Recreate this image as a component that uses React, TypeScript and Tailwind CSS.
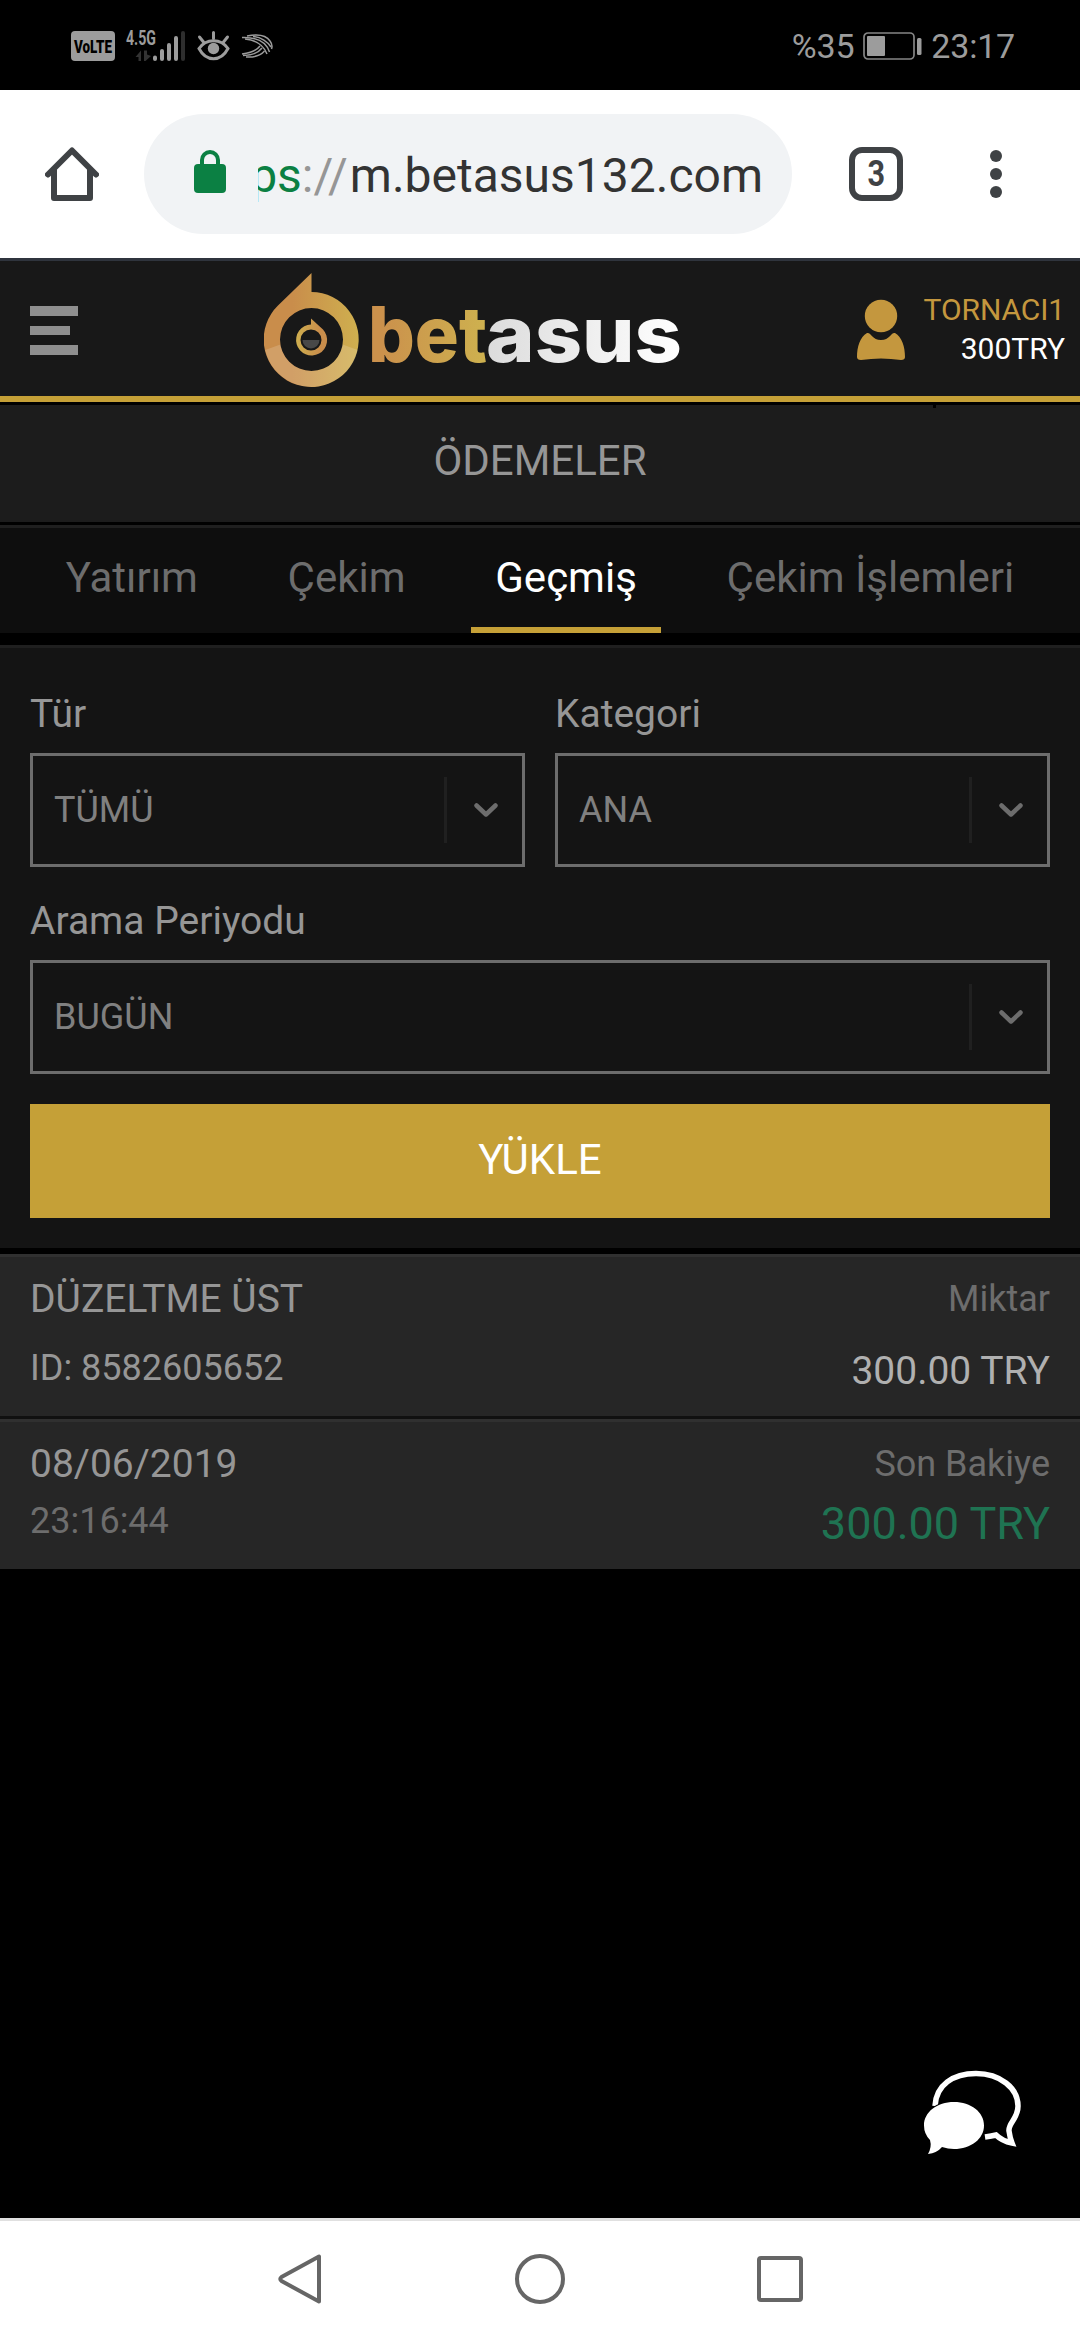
import React from "react";

function StatusBar() {
  return (
    <div className="flex h-[90px] items-center justify-between bg-black pl-[71px] pr-[65px] text-[#9c9c9c]">
      <div className="flex items-center pt-[1px]">
        <svg className="overflow-visible" width="44" height="30" viewBox="0 0 44 30">
          <rect width="44" height="30" rx="4" fill="#9c9c9c" />
          <text x="3" y="21.500" fontSize="19" fontWeight="900" textLength="38" lengthAdjust="spacingAndGlyphs" fill="#000" fontFamily="Roboto, sans-serif">VoLTE</text>
        </svg>
        <svg className="ml-[11px] overflow-visible" width="60" height="32" viewBox="0 0 60 32">
          <text x="0" y="14.500" fontSize="20" fontWeight="700" textLength="30" lengthAdjust="spacingAndGlyphs" fill="#9c9c9c" fontFamily="Roboto, sans-serif">4.5G</text>
          <path d="M12.500 31V27H9.500L15 20.500V31ZM18 20.500h3V24.500L25 26L19.500 31H18Z" fill="#333" />
          <g strokeWidth="4" strokeLinecap="round" stroke="#9c9c9c">
            <path d="M29 27.500v1.500M36 21v8M43 15v14M50 8v21" />
            <path d="M57 3v26" stroke="#2e2e2e" />
          </g>
        </svg>
        <svg className="ml-[11px]" width="34" height="32" viewBox="0 0 34 32" fill="none" stroke="#9c9c9c" strokeWidth="3" strokeLinecap="round">
          <path d="M2 18.500C9 8 24 8 31 18.500C24 32 9 32 2 18.500Z" />
          <path d="M16.500 2.500v6M2.500 7l4 5M30.500 7l-4 5" />
          <circle cx="16.500" cy="18.500" r="5.700" fill="#9c9c9c" stroke="none" />
        </svg>
        <svg className="ml-[10px]" width="33" height="24" viewBox="0 0 33 24" fill="none" stroke="#9c9c9c" strokeWidth="1.500">
          <path d="M6 2C16 0 25 1 29 7Q32 11 30.500 15" />
          <path d="M1 3.500C15 3 25 7 28.500 18" />
          <path d="M12 2.500C20 3 27 8 30 13" />
          <path d="M4 5C15 6 22 10 26 20" />
          <path d="M1 20C10 19 16 16 19 12M2 21.500C12 21.500 18 18 21 14M5 23C13 23.500 20 21 23.500 17" />
        </svg>
      </div>
      <div className="flex items-center pt-[2px] text-[34px] leading-[40px]">
        <span className="tracking-[-0.2px]">%35</span>
        <svg className="ml-[9px] mr-[9px]" width="59" height="28" viewBox="0 0 59 28">
          <rect x="1" y="1" width="50" height="26" rx="4" fill="none" stroke="#858585" strokeWidth="1.700" />
          <rect x="4" y="4" width="18" height="20" rx="1" fill="#9c9c9c" />
          <rect x="54" y="6" width="4.500" height="17" rx="1.500" fill="#9c9c9c" />
        </svg>
        <span className="tracking-[-0.2px]">23:17</span>
      </div>
    </div>
  );
}

function BrowserBar() {
  return (
    <div className="flex h-[171px] items-center border-b-[3px] border-[#2f343d] bg-white">
      <svg className="ml-[45px] shrink-0" width="54" height="54" viewBox="0 0 54 54" fill="none" stroke="#3f4245" strokeWidth="6" strokeLinecap="round" strokeLinejoin="round">
        <path d="M3 27.500L27 3.500L51 27.500" />
        <path d="M9 23v28h36V23" />
      </svg>
      <div className="ml-[45px] flex h-[120px] w-[648px] shrink-0 items-center rounded-full bg-[#f1f3f5] pl-[50px]">
        <svg className="mb-[5px]" width="32" height="43" viewBox="0 0 32 43">
          <rect y="14" width="32" height="29" rx="4" fill="#0b8043" />
          <path d="M8 17V10a8 8 0 0 1 16 0v7" fill="none" stroke="#0b8043" strokeWidth="4" />
        </svg>
        <div className="ml-[32px] flex w-[505px] justify-end overflow-hidden whitespace-nowrap pt-[3px] text-[48px] leading-[60px] text-[#333333]">
          <span><span className="mr-[2px]"><span className="text-[#0b8043]">https</span><span className="text-[#969696]">://</span></span>m.betasus132.com</span>
        </div>
      </div>
      <div className="ml-[57px] flex h-[54px] w-[54px] shrink-0 items-center justify-center rounded-[13px] border-[6px] border-[#3f4245] text-[36px] font-bold leading-[40px] text-[#3f4245]">
        <span className="scale-x-[0.85]">3</span>
      </div>
      <div className="ml-[87px] flex flex-col gap-[6px]">
        <i className="h-3 w-3 rounded-full bg-[#3f4245]" />
        <i className="h-3 w-3 rounded-full bg-[#3f4245]" />
        <i className="h-3 w-3 rounded-full bg-[#3f4245]" />
      </div>
    </div>
  );
}

function Logo() {
  return (
    <svg width="418" height="118" viewBox="264 272 418 118">
      <defs>
        <linearGradient id="ring" x1="264" x2="359" y1="0" y2="0" gradientUnits="userSpaceOnUse">
          <stop offset="0.300" stopColor="#c98d4b" />
          <stop offset="1" stopColor="#cfb04f" />
        </linearGradient>
        <linearGradient id="drop" x1="327" x2="295" y1="0" y2="0" gradientUnits="userSpaceOnUse">
          <stop offset="0.200" stopColor="#c98d4b" />
          <stop offset="1" stopColor="#cfb04f" />
        </linearGradient>
        <linearGradient id="gold" x1="371" x2="485" y1="0" y2="0" gradientUnits="userSpaceOnUse">
          <stop offset="0.100" stopColor="#cb914c" />
          <stop offset="1" stopColor="#ceb14f" />
        </linearGradient>
        <linearGradient id="silver" x1="487" x2="680" y1="0" y2="0" gradientUnits="userSpaceOnUse">
          <stop offset="0" stopColor="#dcdcdc" />
          <stop offset="1" stopColor="#ffffff" />
        </linearGradient>
      </defs>
      <path fillRule="evenodd" fill="url(#ring)" d="M311.500 273V292A47.500 47.500 0 1 1 278 305.500ZM311.500 308A31.500 31.500 0 1 0 311.500 371A31.500 31.500 0 1 0 311.500 308Z" />
      <path fill="#fff" fillOpacity="0.160" d="M265.200 350L280.400 344.500A31.500 31.500 0 0 0 342.600 344.500L357.800 350A47.500 47.500 0 0 1 265.200 350Z" />
      <path fillRule="evenodd" fill="url(#drop)" d="M311 318.500V324.500A15.500 15.500 0 1 0 323 329.500ZM311 329.500A10.500 10.500 0 1 1 311 350.500A10.500 10.500 0 1 1 311 329.500Z" />
      <path fill="#484848" d="M302.500 340H319.500A8.500 8.500 0 0 1 302.500 340Z" />
      <g fontFamily="Inter, sans-serif" fontWeight="800" fontSize="77">
        <text x="368" y="362" fill="url(#gold)" textLength="119" lengthAdjust="spacingAndGlyphs">bet</text>
        <text x="486" y="362" fill="url(#silver)" textLength="196" lengthAdjust="spacingAndGlyphs">asus</text>
      </g>
    </svg>
  );
}

function SiteHeader() {
  return (
    <header className="flex h-[144px] justify-between border-b-[3px] border-black bg-[#181818]">
      <div className="flex h-[141px] w-full items-start border-b-[6px] border-[#c5a037]">
        <div className="ml-[30px] mt-[45px] flex w-12 flex-col gap-[10px]">
          <i className="h-[9.500px] w-12 bg-[#8f8f8f]" />
          <i className="h-[9.500px] w-10 bg-[#8f8f8f]" />
          <i className="h-[9.500px] w-12 bg-[#8f8f8f]" />
        </div>
        <div className="ml-[186px] mt-[11px]"><Logo /></div>
        <svg className="ml-[175px] mt-[38px]" width="48" height="62" viewBox="0 0 48 62" fill="#c4973e">
          <circle cx="24" cy="17" r="16.200" />
          <path d="M10 34C14 33 15 41 24 41S34 33 38 34C45 38 48 48 48 58Q48 61 44 61Q24 58 4 61Q0 61 0 58C0 48 3 38 10 34Z" />
        </svg>
        <div className="mr-[15px] mt-[29px] flex grow flex-col items-end text-[30px] leading-[39px]">
          <span className="tracking-[-0.1px] text-[#c4973e]">TORNACI1</span>
          <span className="text-white">300TRY</span>
        </div>
      </div>
    </header>
  );
}

const tabs = ["Yatırım", "Çekim", "Geçmiş", "Çekim İşlemleri"];

function Tabs() {
  return (
    <nav className="flex h-[108px] justify-evenly border-t-[3px] border-[#1f1f1f] bg-[#0e0e0e] text-[42px] leading-[99px]">
      {tabs.map((t) => (
        <a key={t} className={t === "Geçmiş" ? "border-b-[6px] border-[#c5a037] px-6 text-white" : "border-b-[6px] border-transparent px-6 text-[#6d6d6d]"}>
          {t}
        </a>
      ))}
    </nav>
  );
}

function Select({ label, value }: { label: string; value: string }) {
  return (
    <div className="flex-1">
      <div className="mb-[16px] text-[39px] leading-[45px] text-[#969696]">{label}</div>
      <div className="flex h-[114px] items-center border-[3px] border-[#6d6d6d] text-[36px] text-[#808080]">
        <span className="grow pl-[21px]">{value}</span>
        <i className="h-[66px] w-[3px] bg-[#202020]" />
        <svg className="ml-[27px] mr-[24px]" width="24" height="15" viewBox="0 0 24 15" fill="none" stroke="#6d6d6d" strokeWidth="4.500" strokeLinecap="round" strokeLinejoin="round">
          <path d="M2.500 2.500L12 11.500L21.500 2.500" />
        </svg>
      </div>
    </div>
  );
}

export default function App() {
  return (
    <div className="flex h-[2340px] w-[1080px] flex-col overflow-hidden bg-black [font-family:Roboto,sans-serif]">
      <StatusBar />
      <BrowserBar />
      <SiteHeader />
      <div className="relative h-[117px] bg-[#1c1c1c] text-center text-[42px] leading-[112px] text-[#969696]">
        ÖDEMELER
        <i className="absolute left-[933px] top-0 h-[3px] w-[3px] bg-black" />
      </div>
      <div className="mt-[3px]"><Tabs /></div>
      <section className="mt-3 h-[603px] border-t-[3px] border-[#1f1f1f] bg-[#141414] px-[30px] pt-[44px]">
        <div className="flex gap-[30px]">
          <Select label="Tür" value="TÜMÜ" />
          <Select label="Kategori" value="ANA" />
        </div>
        <div className="mt-[32px] flex">
          <Select label="Arama Periyodu" value="BUGÜN" />
        </div>
        <button className="mt-[30px] block h-[114px] w-full bg-[#c5a037] pb-[3px] text-[42px] text-white">YÜKLE</button>
      </section>
      <section className="mt-[6px] bg-[#262626]">
        <div className="flex h-[165px] justify-between border-t-[3px] border-b-[3px] border-t-[#303030] border-b-[#101010] px-[30px] pt-[19px] leading-[46px]">
          <div className="text-[#969696]">
            <div className="text-[39px]">DÜZELTME ÜST</div>
            <div className="mt-[23px] text-[36px]">ID: 8582605652</div>
          </div>
          <div className="text-right">
            <div className="text-[36px] text-[#6d6d6d]">Miktar</div>
            <div className="mt-[26px] text-[39px] text-[#b0b0b0]">300.00 TRY</div>
          </div>
        </div>
        <div className="flex h-[150px] justify-between border-t-[3px] border-[#303030] px-[30px] pt-[19px] leading-[46px]">
          <div>
            <div className="text-[39px] text-[#969696]">08/06/2019</div>
            <div className="mt-[11px] text-[36px] text-[#6d6d6d]">23:16:44</div>
          </div>
          <div className="text-right">
            <div className="text-[36px] text-[#6d6d6d]">Son Bakiye</div>
            <div className="mt-[14px] text-[45px] text-[#1f7352]">300.00 TRY</div>
          </div>
        </div>
      </section>
      <div className="flex grow items-end justify-end pb-[64px] pr-[58px]">
        <svg width="98" height="84" viewBox="0 0 98 84">
          <path d="M11 36C12 15 29 3.500 52 3.500C76 3.500 94 18 94 36C94 49 84 53 85 61Q86 68 88 73Q78 71 72 65Q68 66 61 67" fill="none" stroke="#fff" strokeWidth="5.500" />
          <path d="M30 32C47 32 60 42 60 55.500S47 79 30 79Q24 79 18 77Q13 83 4 84Q8 77 6 70Q0 64 0 55.500C0 42 13 32 30 32Z" fill="#fff" stroke="#000" strokeWidth="2" paintOrder="stroke" />
        </svg>
      </div>
      <nav className="flex h-[122px] shrink-0 items-start border-t-[3px] border-[#e0e0e0] bg-white pt-[33px]">
        <svg className="ml-[278px]" width="44" height="50" viewBox="0 0 44 50" fill="none" stroke="#666" strokeWidth="4" strokeLinejoin="round">
          <path d="M41 2.500V47.500L3.500 27Q1 25 3.500 23Z" />
        </svg>
        <div className="ml-[193px] h-[50px] w-[50px] rounded-full border-[4px] border-[#666]" />
        <div className="ml-[192px] mt-[2px] h-[46px] w-[46px] rounded-[4px] border-[4px] border-[#666]" />
      </nav>
    </div>
  );
}
